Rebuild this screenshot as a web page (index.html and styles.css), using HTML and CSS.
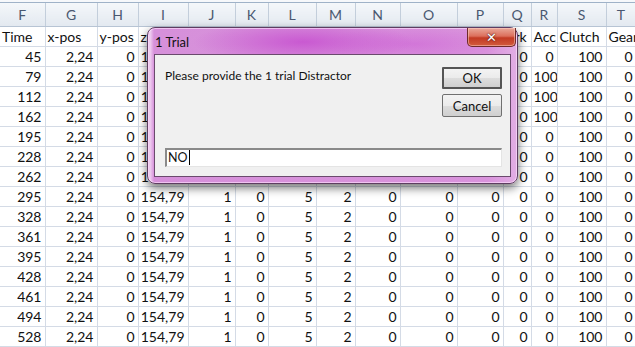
FILE: index.html
```html
<!DOCTYPE html>
<html lang="en">
<head>
  <meta charset="UTF-8">
  <title>1 Trial</title>
  <link rel="stylesheet" href="styles.css">
</head>
<body>
  <div class="sheet">
    <div class="top-strip"></div>
    <table class="grid">
      <colgroup>
        <col style="width:45px"><col style="width:52px"><col style="width:41px"><col style="width:50px">
        <col style="width:47px"><col style="width:33px"><col style="width:48px"><col style="width:39px">
        <col style="width:45px"><col style="width:57px"><col style="width:46px"><col style="width:28px">
        <col style="width:26px"><col style="width:49px"><col style="width:30px">
      </colgroup>
      <tr class="letters">
        <th>F</th><th>G</th><th>H</th><th>I</th><th>J</th><th>K</th><th>L</th><th>M</th>
        <th>N</th><th>O</th><th>P</th><th>Q</th><th>R</th><th>S</th><th>T</th>
      </tr>
      <tr class="names">
        <td>Time</td><td>x-pos</td><td>y-pos</td><td>z-pos</td><td>lane</td><td>ln</td><td>spd</td><td>rpm</td>
        <td>whl</td><td>steer</td><td>pedal</td><td>Brk</td><td>Acc</td><td>Clutch</td><td>Gear</td>
      </tr>
      <tr><td>45</td><td>2,24</td><td>0</td><td>154,79</td><td>1</td><td>0</td><td>5</td><td>2</td><td>0</td><td>0</td><td>0</td><td>0</td><td>0</td><td>100</td><td>0</td></tr>
      <tr><td>79</td><td>2,24</td><td>0</td><td>154,79</td><td>1</td><td>0</td><td>5</td><td>2</td><td>0</td><td>0</td><td>0</td><td>0</td><td>100</td><td>100</td><td>0</td></tr>
      <tr><td>112</td><td>2,24</td><td>0</td><td>154,79</td><td>1</td><td>0</td><td>5</td><td>2</td><td>0</td><td>0</td><td>0</td><td>0</td><td>100</td><td>100</td><td>0</td></tr>
      <tr><td>162</td><td>2,24</td><td>0</td><td>154,79</td><td>1</td><td>0</td><td>5</td><td>2</td><td>0</td><td>0</td><td>0</td><td>0</td><td>100</td><td>100</td><td>0</td></tr>
      <tr><td>195</td><td>2,24</td><td>0</td><td>154,79</td><td>1</td><td>0</td><td>5</td><td>2</td><td>0</td><td>0</td><td>0</td><td>0</td><td>0</td><td>100</td><td>0</td></tr>
      <tr><td>228</td><td>2,24</td><td>0</td><td>154,79</td><td>1</td><td>0</td><td>5</td><td>2</td><td>0</td><td>0</td><td>0</td><td>0</td><td>0</td><td>100</td><td>0</td></tr>
      <tr><td>262</td><td>2,24</td><td>0</td><td>154,79</td><td>1</td><td>0</td><td>5</td><td>2</td><td>0</td><td>0</td><td>0</td><td>0</td><td>0</td><td>100</td><td>0</td></tr>
      <tr><td>295</td><td>2,24</td><td>0</td><td>154,79</td><td>1</td><td>0</td><td>5</td><td>2</td><td>0</td><td>0</td><td>0</td><td>0</td><td>0</td><td>100</td><td>0</td></tr>
      <tr><td>328</td><td>2,24</td><td>0</td><td>154,79</td><td>1</td><td>0</td><td>5</td><td>2</td><td>0</td><td>0</td><td>0</td><td>0</td><td>0</td><td>100</td><td>0</td></tr>
      <tr><td>361</td><td>2,24</td><td>0</td><td>154,79</td><td>1</td><td>0</td><td>5</td><td>2</td><td>0</td><td>0</td><td>0</td><td>0</td><td>0</td><td>100</td><td>0</td></tr>
      <tr><td>395</td><td>2,24</td><td>0</td><td>154,79</td><td>1</td><td>0</td><td>5</td><td>2</td><td>0</td><td>0</td><td>0</td><td>0</td><td>0</td><td>100</td><td>0</td></tr>
      <tr><td>428</td><td>2,24</td><td>0</td><td>154,79</td><td>1</td><td>0</td><td>5</td><td>2</td><td>0</td><td>0</td><td>0</td><td>0</td><td>0</td><td>100</td><td>0</td></tr>
      <tr><td>461</td><td>2,24</td><td>0</td><td>154,79</td><td>1</td><td>0</td><td>5</td><td>2</td><td>0</td><td>0</td><td>0</td><td>0</td><td>0</td><td>100</td><td>0</td></tr>
      <tr><td>494</td><td>2,24</td><td>0</td><td>154,79</td><td>1</td><td>0</td><td>5</td><td>2</td><td>0</td><td>0</td><td>0</td><td>0</td><td>0</td><td>100</td><td>0</td></tr>
      <tr><td>528</td><td>2,24</td><td>0</td><td>154,79</td><td>1</td><td>0</td><td>5</td><td>2</td><td>0</td><td>0</td><td>0</td><td>0</td><td>0</td><td>100</td><td>0</td></tr>
    </table>

    <div class="dialog">
      <div class="titlebar">
        <span class="title">1 Trial</span>
        <button class="close">&#x2715;</button>
      </div>
      <div class="client">
        <div class="body-row">
          <p class="prompt">Please provide the 1 trial Distractor</p>
          <div class="actions">
            <button class="btn default">OK</button>
            <button class="btn">Cancel</button>
          </div>
        </div>
        <div class="input"><span class="value">NO</span></div>
      </div>
    </div>
  </div>
</body>
</html>
```

FILE: styles.css
```css
* {
  margin: 0;
  padding: 0;
  box-sizing: border-box;
}
body {
  background: #ffffff;
  font-family: 'Lato', 'Liberation Sans', sans-serif;
  overflow: hidden;
}
.sheet {
  position: relative;
  width: 635px;
  height: 347px;
  overflow: hidden;
}
.top-strip {
  height: 3px;
  background: #f6f8fb;
  border-bottom: 1px solid #9fb2c8;
}
.grid {
  border-collapse: collapse;
  table-layout: fixed;
  width: 636px;
  font-size: 14px;
  color: #111111;
}
.grid td {
  height: 20px;
  padding: 0 3px 0 2px;
  text-align: right;
  white-space: nowrap;
  overflow: hidden;
  border-right: 1px solid #d4dbe6;
  border-bottom: 1px solid #d4dbe6;
  line-height: 19px;
}
.letters th {
  height: 23px;
  font-weight: normal;
  font-size: 14px;
  color: #4a5870;
  background: linear-gradient(#f4f7fa, #e3e9f0);
  border-right: 1px solid #c3cedb;
  border-bottom: 1px solid #b7c4d4;
}
.names td {
  text-align: left;
  text-overflow: clip;
}

/* input box dialog */
.dialog {
  position: absolute;
  left: 147px;
  top: 27px;
  width: 371px;
  height: 157px;
  display: flex;
  flex-direction: column;
  padding: 0 6px 6px 6px;
  border: 1px solid #5e3d61;
  border-radius: 8px;
  background:
    radial-gradient(ellipse 110px 22px at 42% 14px, rgba(196, 70, 206, 0.75), rgba(196, 70, 206, 0) 100%),
    radial-gradient(ellipse 90px 18px at 72% 16px, rgba(205, 95, 214, 0.55), rgba(205, 95, 214, 0) 100%),
    linear-gradient(to right, #e6b3e8 0, #f0d0f1 2px, #d690da 6px, #d993dc 92%, #e2aee4 100%);
  box-shadow: 0 4px 10px rgba(0, 0, 0, 0.55), inset 0 0 0 1px rgba(255, 230, 255, 0.6);
}
.titlebar {
  height: 26px;
  display: flex;
  align-items: center;
  position: relative;
}
.title {
  font-size: 13px;
  color: #111111;
  padding-left: 1px;
  padding-top: 2px;
}
.close {
  position: absolute;
  right: -5px;
  top: 0;
  width: 49px;
  height: 19px;
  border: 1px solid #6e2a2a;
  border-top: none;
  border-radius: 0 0 5px 5px;
  background: linear-gradient(#e9a899 0, #dc6f5c 45%, #c23a24 55%, #d25b3c 100%);
  color: #ffffff;
  font-size: 13px;
  font-weight: bold;
  line-height: 17px;
  font-family: 'DejaVu Sans', sans-serif;
  text-shadow: 0 0 2px #5a1a10, 0 0 1px #5a1a10;
  box-shadow: inset 0 0 0 1px rgba(255, 210, 200, 0.5);
}
.client {
  flex: 1;
  display: flex;
  flex-direction: column;
  background: #f0f0f0;
  border: 1px solid #6a4a6d;
  padding: 12px 8px 9px 10px;
  font-size: 12px;
  color: #111111;
}
.body-row {
  display: flex;
  justify-content: space-between;
}
.prompt {
  padding-top: 1px;
  font-size: 12px;
}
.actions {
  display: flex;
  flex-direction: column;
  gap: 5px;
}
.btn {
  width: 60px;
  height: 23px;
  font-family: 'Lato', 'Liberation Sans', sans-serif;
  font-size: 13px;
  color: #111111;
  background: linear-gradient(#f3f3f3 0, #ebebeb 50%, #dddddd 51%, #cfcfcf 100%);
  border: 1px solid #707070;
  border-radius: 2px;
}
.btn.default {
  height: 22px;
  border: 2px solid #555555;
  border-radius: 1px;
}
.input {
  margin-top: auto;
  height: 19px;
  background: #ffffff;
  border-top: 2px solid #8a8a8a;
  border-left: 2px solid #8a8a8a;
  border-right: 1px solid #e4e4e4;
  border-bottom: 1px solid #e4e4e4;
  font-size: 12.5px;
  line-height: 16px;
  padding-left: 1px;
}
.value {
  border-right: 1px solid #000000;
  padding-right: 1px;
}
```
